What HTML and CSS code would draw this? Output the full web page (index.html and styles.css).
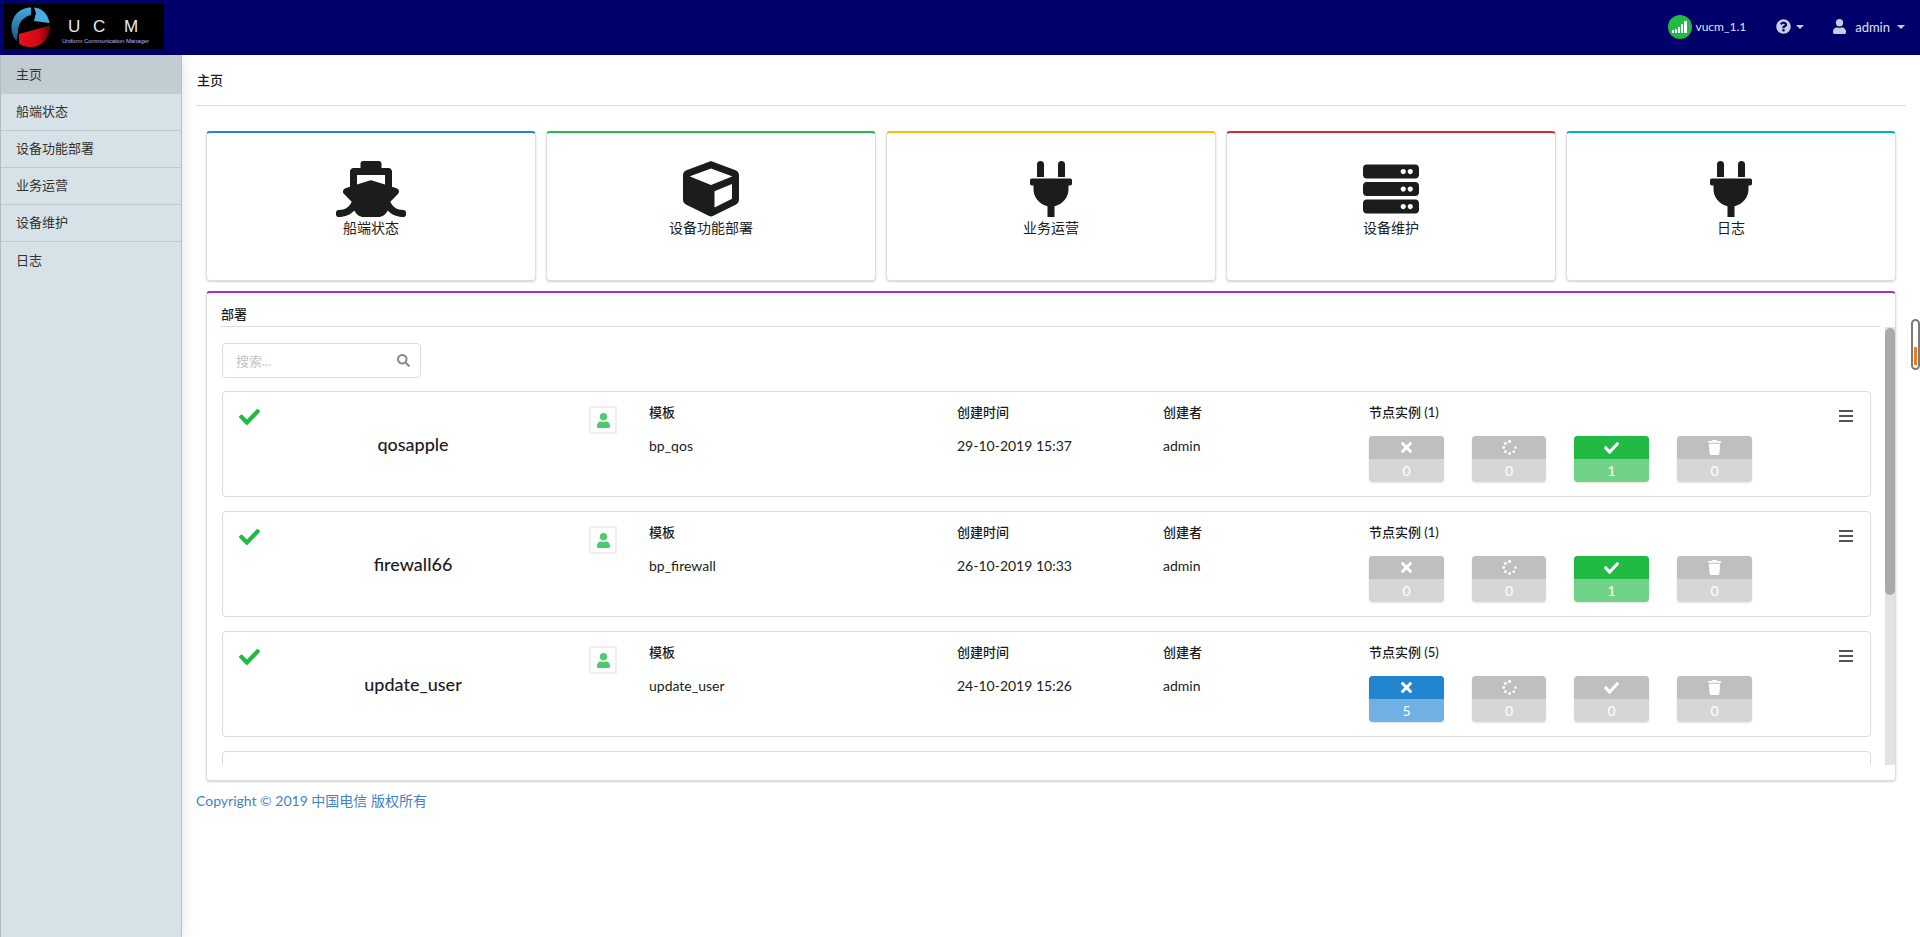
FILE: index.html
```html
<!DOCTYPE html>
<html lang="zh-CN">

<head>
    <meta charset="UTF-8">
    <meta name="viewport" content="width=device-width, initial-scale=1.0">
    <title>UCM</title>
    <link rel="stylesheet" href="styles.css">
</head>

<body>
    <!-- icon set, used below with <use> -->
    <svg class="sprite" aria-hidden="true">
        <symbol id="i-ship" viewBox="0 0 640 512"><path d="M496.616 372.639l70.012-70.012c16.899-16.9 9.942-45.771-12.836-53.092L512 236.102V96c0-17.673-14.327-32-32-32h-64V24c0-13.255-10.745-24-24-24H248c-13.255 0-24 10.745-24 24v40h-64c-17.673 0-32 14.327-32 32v140.102l-41.792 13.433c-22.753 7.313-29.754 36.173-12.836 53.092l70.012 70.012C125.828 416.287 85.587 448 24 448c-13.255 0-24 10.745-24 24v16c0 13.255 10.745 24 24 24 61.023 0 107.499-20.61 143.258-59.396C181.677 487.432 216.021 512 256 512h128c39.979 0 74.323-24.568 88.742-59.396C508.495 491.384 554.968 512 616 512c13.255 0 24-10.745 24-24v-16c0-13.255-10.745-24-24-24-60.817 0-101.542-31.001-119.384-75.361zM192 128h256v87.531l-119.208-38.317a32.006 32.006 0 0 0-19.584 0L192 215.531V128z"/></symbol>
        <symbol id="i-cube" viewBox="0 0 512 512"><path d="M239.1 6.3l-208 78c-18.7 7-31.1 25-31.1 45v225.1c0 18.2 10.3 34.8 26.5 42.9l208 104c13.5 6.8 29.4 6.8 42.9 0l208-104c16.3-8.1 26.5-24.8 26.5-42.9V129.3c0-20-12.4-37.9-31.1-44.9l-208-78C262 2.2 250 2.2 239.1 6.3zM256 68.4l192 72v1.1l-192 78-192-78v-1.1l192-72zm32 356V275.5l160-65v133.9l-160 80z"/></symbol>
        <symbol id="i-plug" viewBox="0 0 384 512"><path d="M320 32a32 32 0 0 0-64 0v114h64zm48 128H16a16 16 0 0 0-16 16v32a16 16 0 0 0 16 16h16v32a160.07 160.07 0 0 0 128 156.8V512h64v-99.2A160.07 160.07 0 0 0 352 256v-32h16a16 16 0 0 0 16-16v-32a16 16 0 0 0-16-16zM128 32a32 32 0 0 0-64 0v114h64z"/></symbol>
        <symbol id="i-server" viewBox="0 0 512 512"><path d="M480 160H32c-17.673 0-32-14.327-32-32V64c0-17.673 14.327-32 32-32h448c17.673 0 32 14.327 32 32v64c0 17.673-14.327 32-32 32zm-48-88c-13.255 0-24 10.745-24 24s10.745 24 24 24 24-10.745 24-24-10.745-24-24-24zm-64 0c-13.255 0-24 10.745-24 24s10.745 24 24 24 24-10.745 24-24-10.745-24-24-24zm112 248H32c-17.673 0-32-14.327-32-32v-64c0-17.673 14.327-32 32-32h448c17.673 0 32 14.327 32 32v64c0 17.673-14.327 32-32 32zm-48-88c-13.255 0-24 10.745-24 24s10.745 24 24 24 24-10.745 24-24-10.745-24-24-24zm-64 0c-13.255 0-24 10.745-24 24s10.745 24 24 24 24-10.745 24-24-10.745-24-24-24zm112 248H32c-17.673 0-32-14.327-32-32v-64c0-17.673 14.327-32 32-32h448c17.673 0 32 14.327 32 32v64c0 17.673-14.327 32-32 32zm-48-88c-13.255 0-24 10.745-24 24s10.745 24 24 24 24-10.745 24-24-10.745-24-24-24zm-64 0c-13.255 0-24 10.745-24 24s10.745 24 24 24 24-10.745 24-24-10.745-24-24-24z"/></symbol>
        <symbol id="i-check" viewBox="0 66 512 378" preserveAspectRatio="none"><path d="M173.898 439.404l-166.4-166.4c-9.997-9.997-9.997-26.206 0-36.204l36.203-36.204c9.997-9.998 26.207-9.998 36.204 0L192 312.69 432.095 72.596c9.997-9.997 26.207-9.997 36.204 0l36.203 36.204c9.997 9.997 9.997 26.206 0 36.204l-294.4 294.401c-9.998 9.997-26.207 9.997-36.204-.001z"/></symbol>
        <symbol id="i-times" viewBox="0 80 352 352"><path d="M242.72 256l100.07-100.07c12.28-12.28 12.28-32.19 0-44.48l-22.24-22.24c-12.28-12.28-32.19-12.28-44.48 0L176 189.28 75.93 89.21c-12.28-12.28-32.19-12.28-44.48 0L9.21 111.45c-12.28 12.28-12.28 32.19 0 44.48L109.28 256 9.21 356.07c-12.28 12.28-12.28 32.19 0 44.48l22.24 22.24c12.28 12.28 32.2 12.28 44.48 0L176 322.72l100.07 100.07c12.28 12.28 32.2 12.28 44.48 0l22.24-22.24c12.28-12.28 12.28-32.19 0-44.48L242.72 256z"/></symbol>
        <symbol id="i-trash" viewBox="0 0 448 512"><path d="M432 32H312l-9.4-18.7A24 24 0 0 0 281.1 0H166.8a23.72 23.72 0 0 0-21.4 13.3L136 32H16A16 16 0 0 0 0 48v32a16 16 0 0 0 16 16h416a16 16 0 0 0 16-16V48a16 16 0 0 0-16-16zM53.2 467a48 48 0 0 0 47.9 45h245.8a48 48 0 0 0 47.9-45L416 128H32z"/></symbol>
        <symbol id="i-spinner" viewBox="0 0 16 16"><circle cx="8" cy="1.600" r="1.700"/><circle cx="3.600" cy="3.400" r="1.600"/><circle cx="1.700" cy="8" r="1.500"/><circle cx="3.600" cy="12.500" r="1.500"/><circle cx="8" cy="14.400" r="1.600"/><circle cx="12.500" cy="12.500" r="1.400"/><circle cx="14.400" cy="8" r="1.400"/></symbol>
        <symbol id="i-user" viewBox="0 0 448 512"><path d="M224 256c70.7 0 128-57.3 128-128S294.7 0 224 0 96 57.3 96 128s57.3 128 128 128zm89.6 32h-16.7c-22.2 10.2-46.9 16-72.9 16s-50.6-5.8-72.9-16h-16.7C60.2 288 0 348.2 0 422.4V464c0 26.5 21.5 48 48 48h352c26.5 0 48-21.5 48-48v-41.6c0-74.2-60.2-134.4-134.4-134.4z"/></symbol>
        <symbol id="i-help" viewBox="0 0 512 512"><path d="M504 256c0 136.997-111.043 248-248 248S8 392.997 8 256C8 119.083 119.043 8 256 8s248 111.083 248 248zM262.655 90c-54.497 0-89.255 22.957-116.549 63.758-3.536 5.286-2.353 12.415 2.715 16.258l34.699 26.31c5.205 3.947 12.621 3.008 16.665-2.122 17.864-22.658 30.113-35.797 57.303-35.797 20.429 0 45.698 13.148 45.698 32.958 0 14.976-12.363 22.667-32.534 33.976C247.128 238.528 216 254.941 216 296v4c0 6.627 5.373 12 12 12h56c6.627 0 12-5.373 12-12v-1.333c0-28.462 83.186-29.647 83.186-106.667 0-58.002-60.165-102-116.531-102zM256 338c-25.365 0-46 20.635-46 46 0 25.364 20.635 46 46 46s46-20.636 46-46c0-25.365-20.635-46-46-46z"/></symbol>
        <symbol id="i-search" viewBox="0 0 512 512"><path d="M505 442.7L405.3 343c-4.5-4.5-10.6-7-17-7H372c27.6-35.3 44-79.7 44-128C416 93.1 322.9 0 208 0S0 93.1 0 208s93.1 208 208 208c48.3 0 92.7-16.4 128-44v16.3c0 6.4 2.5 12.5 7 17l99.7 99.7c9.4 9.4 24.6 9.4 33.9 0l28.3-28.3c9.4-9.4 9.4-24.6.1-34zM208 336c-70.7 0-128-57.2-128-128 0-70.7 57.2-128 128-128 70.7 0 128 57.2 128 128 0 70.7-57.2 128-128 128z"/></symbol>
        <symbol id="i-bars" viewBox="0 0 14 12"><rect y="0" width="14" height="2"/><rect y="5" width="14" height="2"/><rect y="10" width="14" height="2"/></symbol>
    </svg>

    <header class="topbar">
        <svg class="logo" viewBox="0 0 160 45">
            <defs>
                <linearGradient id="logo-red" x1="0" x2="1" y1="0" y2="0">
                    <stop offset="0" stop-color="#e8101c"/>
                    <stop offset="0.65" stop-color="#d00a14"/>
                    <stop offset="1" stop-color="#5a0508"/>
                </linearGradient>
                <linearGradient id="logo-blue" x1="0" x2="0" y1="0" y2="1">
                    <stop offset="0" stop-color="#46a9e2"/>
                    <stop offset="1" stop-color="#17577f"/>
                </linearGradient>
            </defs>
            <rect width="160" height="45" fill="#000"/>
            <path d="M27 3.500C15 3.500 7.500 13 7.500 23.500c0 5.500 2 10 5 13.500l1.500-9c0-8 4-15 13-17z" fill="url(#logo-blue)"/>
            <path d="M30 3.500c8 .5 14 6.500 15.500 15.500L30 17l2-8z" fill="#4cabe2"/>
            <path d="M15 30l31-8.500C47 33 38 43 27 43c-6 0-10-1.500-12-4z" fill="url(#logo-red)"/>
            <text class="logo-name" x="64" y="28">U</text>
            <text class="logo-name" x="89" y="28">C</text>
            <text class="logo-name" x="120" y="28">M</text>
            <text class="logo-sub" x="58" y="39" textLength="87">Uniform Communication Manager</text>
        </svg>
        <nav class="topnav">
            <a class="topnav-item topnav-site" href="#">
                <svg class="signal" viewBox="0 0 24 24">
                    <circle cx="12" cy="12" r="12" fill="#21ba45"/>
                    <rect x="4" y="15" width="2" height="3" fill="#fff"/>
                    <rect x="7" y="14" width="2" height="4" fill="#fff"/>
                    <rect x="10" y="12" width="2" height="6" fill="#fff"/>
                    <rect x="13" y="9" width="2" height="9" fill="#fff"/>
                    <rect x="16" y="6" width="3" height="12" fill="#fff"/>
                </svg>
                vucm_1.1
            </a>
            <a class="topnav-item topnav-help" href="#">
                <svg class="ic-help"><use href="#i-help"/></svg><i class="caret"></i>
            </a>
            <a class="topnav-item topnav-user" href="#">
                <svg class="ic-head"><use href="#i-user"/></svg>admin<i class="caret"></i>
            </a>
        </nav>
    </header>

    <div class="layout">
        <aside class="sidebar">
            <a class="side-link active" href="#">主页</a>
            <a class="side-link" href="#">船端状态</a>
            <a class="side-link" href="#">设备功能部署</a>
            <a class="side-link" href="#">业务运营</a>
            <a class="side-link" href="#">设备维护</a>
            <a class="side-link" href="#">日志</a>
        </aside>

        <main class="content">
            <h1 class="page-title">主页</h1>

            <section class="shortcuts">
                <a class="shortcut blue" href="#"><svg class="shortcut-icon ship"><use href="#i-ship"/></svg>船端状态</a>
                <a class="shortcut green" href="#"><svg class="shortcut-icon"><use href="#i-cube"/></svg>设备功能部署</a>
                <a class="shortcut yellow" href="#"><svg class="shortcut-icon"><use href="#i-plug"/></svg>业务运营</a>
                <a class="shortcut red" href="#"><svg class="shortcut-icon"><use href="#i-server"/></svg>设备维护</a>
                <a class="shortcut teal" href="#"><svg class="shortcut-icon"><use href="#i-plug"/></svg>日志</a>
            </section>

            <section class="panel">
                <h2 class="panel-title">部署</h2>
                <div class="panel-body">
                    <div class="panel-scroll">
                        <div class="search">
                            <input class="search-input" type="text" placeholder="搜索...">
                            <svg class="search-icon"><use href="#i-search"/></svg>
                        </div>

                        <article class="item">
                            <div class="item-main">
                                <svg class="item-check"><use href="#i-check"/></svg>
                                <div class="item-name">qosapple</div>
                                <div class="item-owner"><svg><use href="#i-user"/></svg></div>
                            </div>
                            <div class="field"><b>模板</b><span>bp_qos</span></div>
                            <div class="field"><b>创建时间</b><span>29-10-2019 15:37</span></div>
                            <div class="field"><b>创建者</b><span>admin</span></div>
                            <div class="nodes">
                                <div class="nodes-head"><b>节点实例 (1)</b><svg class="nodes-menu"><use href="#i-bars"/></svg></div>
                                <div class="stats">
                                    <div class="stat"><span class="stat-icon"><svg class="s-times"><use href="#i-times"/></svg></span><span class="stat-num">0</span></div>
                                    <div class="stat"><span class="stat-icon"><svg class="s-spin"><use href="#i-spinner"/></svg></span><span class="stat-num">0</span></div>
                                    <div class="stat ok"><span class="stat-icon"><svg class="s-check"><use href="#i-check"/></svg></span><span class="stat-num">1</span></div>
                                    <div class="stat"><span class="stat-icon"><svg class="s-trash"><use href="#i-trash"/></svg></span><span class="stat-num">0</span></div>
                                </div>
                            </div>
                        </article>

                        <article class="item">
                            <div class="item-main">
                                <svg class="item-check"><use href="#i-check"/></svg>
                                <div class="item-name">firewall66</div>
                                <div class="item-owner"><svg><use href="#i-user"/></svg></div>
                            </div>
                            <div class="field"><b>模板</b><span>bp_firewall</span></div>
                            <div class="field"><b>创建时间</b><span>26-10-2019 10:33</span></div>
                            <div class="field"><b>创建者</b><span>admin</span></div>
                            <div class="nodes">
                                <div class="nodes-head"><b>节点实例 (1)</b><svg class="nodes-menu"><use href="#i-bars"/></svg></div>
                                <div class="stats">
                                    <div class="stat"><span class="stat-icon"><svg class="s-times"><use href="#i-times"/></svg></span><span class="stat-num">0</span></div>
                                    <div class="stat"><span class="stat-icon"><svg class="s-spin"><use href="#i-spinner"/></svg></span><span class="stat-num">0</span></div>
                                    <div class="stat ok"><span class="stat-icon"><svg class="s-check"><use href="#i-check"/></svg></span><span class="stat-num">1</span></div>
                                    <div class="stat"><span class="stat-icon"><svg class="s-trash"><use href="#i-trash"/></svg></span><span class="stat-num">0</span></div>
                                </div>
                            </div>
                        </article>

                        <article class="item">
                            <div class="item-main">
                                <svg class="item-check"><use href="#i-check"/></svg>
                                <div class="item-name">update_user</div>
                                <div class="item-owner"><svg><use href="#i-user"/></svg></div>
                            </div>
                            <div class="field"><b>模板</b><span>update_user</span></div>
                            <div class="field"><b>创建时间</b><span>24-10-2019 15:26</span></div>
                            <div class="field"><b>创建者</b><span>admin</span></div>
                            <div class="nodes">
                                <div class="nodes-head"><b>节点实例 (5)</b><svg class="nodes-menu"><use href="#i-bars"/></svg></div>
                                <div class="stats">
                                    <div class="stat failed"><span class="stat-icon"><svg class="s-times"><use href="#i-times"/></svg></span><span class="stat-num">5</span></div>
                                    <div class="stat"><span class="stat-icon"><svg class="s-spin"><use href="#i-spinner"/></svg></span><span class="stat-num">0</span></div>
                                    <div class="stat"><span class="stat-icon"><svg class="s-check"><use href="#i-check"/></svg></span><span class="stat-num">0</span></div>
                                    <div class="stat"><span class="stat-icon"><svg class="s-trash"><use href="#i-trash"/></svg></span><span class="stat-num">0</span></div>
                                </div>
                            </div>
                        </article>

                        <!-- next row is cut off by the panel, only its top edge shows -->
                        <article class="item"></article>
                    </div>
                    <div class="scrollbar"><div class="scrollbar-thumb"></div></div>
                </div>
            </section>

            <footer class="copyright"><a href="#">Copyright © 2019 中国电信 版权所有</a></footer>
        </main>
    </div>

    <!-- little meter that floats at the window edge -->
    <div class="meter"><i></i></div>
</body>

</html>
```

FILE: styles.css
```css
* {
    box-sizing: border-box;
}

html,
body {
    height: 100%;
}

body {
    margin: 0;
    overflow: hidden;
    background: #fff;
    color: #1b1c1d;
    font-family: Lato, "Noto Sans CJK SC", sans-serif;
    font-size: 13px;
    line-height: 20px;
}

a {
    color: inherit;
    text-decoration: none;
}

.sprite {
    display: none;
}

/* top bar */
.topbar {
    display: flex;
    align-items: center;
    justify-content: space-between;
    height: 55px;
    padding: 0 15px 2px 4px;
    background: #00006a;
}

.logo {
    display: block;
    width: 160px;
    height: 45px;
}

.logo-name {
    font-family: "Liberation Sans", sans-serif;
    font-size: 17px;
    fill: #e8eaf6;
}

.logo-sub {
    font-family: "Liberation Sans", sans-serif;
    font-size: 6px;
    fill: #b4b4f4;
}

.topnav {
    display: flex;
    align-items: center;
    color: #dfe1f3;
}

.topnav-item {
    display: flex;
    align-items: center;
}

.topnav-site {
    gap: 3px;
    font-size: 12px;
}

.topnav-help {
    margin-left: 30px;
}

.topnav-user {
    margin-left: 29px;
}

.signal {
    width: 24px;
    height: 24px;
}

.ic-help {
    width: 15px;
    height: 15px;
    fill: #c9cce6;
}

.ic-head {
    width: 13px;
    height: 15px;
    margin-right: 9px;
    fill: #c9cce6;
}

.caret {
    width: 0;
    height: 0;
    margin-left: 5px;
    border-top: 4px solid #c9cce6;
    border-left: 4px solid transparent;
    border-right: 4px solid transparent;
}

.topnav-user .caret {
    margin-left: 7px;
}

/* page frame */
.layout {
    display: flex;
    height: calc(100% - 55px);
}

.sidebar {
    position: relative;
    flex: 0 0 182px;
    border-left: 1px solid #aebbc0;
    border-right: 1px solid #b4c1c6;
    background: #d6e2e7;
    box-shadow: 0 0 14px rgba(0, 0, 0, .12);
}

.side-link {
    display: flex;
    align-items: center;
    height: 37px;
    padding: 0 0 2px 15px;
    border-bottom: 1px solid #bccad0;
    color: #333;
}

.side-link.active {
    height: 39px;
    border-bottom: 0;
    background: #c2ccd3;
}

.side-link:last-child {
    border-bottom: 0;
}

.content {
    flex: 1;
    min-width: 0;
    padding: 0 14px;
}

.page-title {
    display: flex;
    align-items: center;
    height: 51px;
    margin: 0;
    padding-left: 1px;
    border-bottom: 1px solid #ddd;
    font-size: 13px;
    font-weight: 500;
}

/* shortcut cards */
.shortcuts {
    display: grid;
    grid-template-columns: repeat(5, 1fr);
    gap: 10px;
    margin: 25px 10px 0;
}

.shortcut {
    display: flex;
    flex-direction: column;
    align-items: center;
    height: 150px;
    padding-top: 28px;
    border: 1px solid #ddd;
    border-top: 2px solid #ddd;
    border-radius: 4px;
    box-shadow: 0 1px 2px rgba(0, 0, 0, .18);
    font-size: 14px;
}

.shortcut-icon {
    display: block;
    width: 56px;
    height: 56px;
    margin-bottom: 1px;
    fill: #1b1c1d;
}

.shortcut-icon.ship {
    width: 70px;
}

.blue {
    border-top-color: #2185d0;
}

.green {
    border-top-color: #21ba45;
}

.yellow {
    border-top-color: #fbbd08;
}

.red {
    border-top-color: #db2828;
}

.teal {
    border-top-color: #00b5ad;
}

/* deployments panel */
.panel {
    display: flex;
    flex-direction: column;
    height: 490px;
    margin: 10px 10px 0;
    border: 1px solid #ddd;
    border-top: 2px solid #a333c8;
    border-radius: 4px;
    box-shadow: 0 1px 2px rgba(0, 0, 0, .18);
}

.panel-title {
    flex: none;
    height: 34px;
    margin: 0 15px 0 14px;
    padding-top: 11px;
    border-bottom: 1px solid #ddd;
    font-size: 13px;
    font-weight: 500;
}

.panel-body {
    display: flex;
    flex: 1;
    min-height: 0;
    margin-bottom: 15px;
}

.panel-scroll {
    flex: 1;
    min-width: 0;
    margin-left: 14px;
    padding: 16px 14px 0 1px;
    overflow: hidden;
}

.scrollbar {
    flex: 0 0 10px;
    background: #e3e3e3;
}

.scrollbar-thumb {
    height: 267px;
    margin-top: 1px;
    border-radius: 5px;
    background: #aaa;
}

.search {
    display: flex;
    align-items: center;
    width: 199px;
    height: 35px;
    margin-bottom: 13px;
    padding: 0 10px 0 13px;
    border: 1px solid #ddd;
    border-radius: 4px;
}

.search-input {
    flex: 1;
    min-width: 0;
    padding: 0;
    border: 0;
    outline: 0;
    font: inherit;
}

.search-input::placeholder {
    color: #c4c4c4;
}

.search-icon {
    width: 13px;
    height: 13px;
    fill: #8d8d8d;
}

/* one deployment */
.item {
    display: grid;
    grid-template-columns: 426px 308px 206px 206px 1fr;
    height: 106px;
    margin-bottom: 14px;
    border: 1px solid #ddd;
    border-radius: 4px;
}

.item-main {
    display: flex;
    align-items: flex-start;
    padding: 14px 0 0 16px;
}

.item-check {
    flex: none;
    width: 21px;
    height: 16px;
    margin-top: 3px;
    fill: #21ba45;
}

.item-name {
    flex: none;
    width: 306px;
    margin-top: 26px;
    font-size: 18px;
    font-weight: 500;
    line-height: 24px;
    text-align: center;
}

.item-owner {
    display: flex;
    align-items: center;
    justify-content: center;
    flex: none;
    width: 28px;
    height: 28px;
    margin-left: 23px;
    border: 2px solid #eee;
}

.item-owner svg {
    width: 15px;
    height: 15px;
    fill: #4dc96f;
}

.field {
    padding-top: 10px;
}

.field b,
.nodes b {
    display: block;
    font-weight: 500;
}

.field span {
    display: block;
    margin-top: 14px;
    font-size: 14px;
}

.nodes {
    padding: 10px 17px 0 0;
}

.nodes-head {
    display: flex;
    justify-content: space-between;
}

.nodes-menu {
    width: 14px;
    height: 12px;
    margin-top: 8px;
    fill: #555;
}

.stats {
    display: flex;
    gap: 28px;
    margin-top: 14px;
}

.stat {
    width: 75px;
    border-radius: 4px;
    overflow: hidden;
    box-shadow: 0 1px 2px rgba(0, 0, 0, .12);
    background: #d6d6d6;
    color: #fff;
    font-size: 14px;
    text-align: center;
}

.stat:nth-child(2) {
    width: 74px;
}

.stat-icon {
    display: flex;
    align-items: center;
    justify-content: center;
    height: 23px;
    background: #bfbfbf;
    fill: #fff;
}

.stat-num {
    display: block;
    height: 23px;
    line-height: 23px;
}

.stat.ok {
    background: #6fd287;
}

.stat.ok .stat-icon {
    background: #21ba45;
}

.stat.failed {
    background: #70b0e2;
}

.stat.failed .stat-icon {
    background: #2185d0;
}

.s-times {
    width: 11px;
    height: 11px;
}

.s-spin {
    width: 15px;
    height: 15px;
}

.s-check {
    width: 15px;
    height: 12px;
}

.s-trash {
    width: 13px;
    height: 15px;
}

.copyright {
    margin-top: 10px;
    font-size: 14px;
    color: #4183c4;
}

.meter {
    position: fixed;
    top: 319px;
    right: 0;
    width: 9px;
    height: 51px;
    padding: 26px 0 3px 3px;
    border: 2px solid #7b7b7b;
    border-radius: 5px;
}

.meter i {
    display: block;
    width: 3px;
    height: 100%;
    margin-left: -2px;
    background: #f47b16;
}
```
